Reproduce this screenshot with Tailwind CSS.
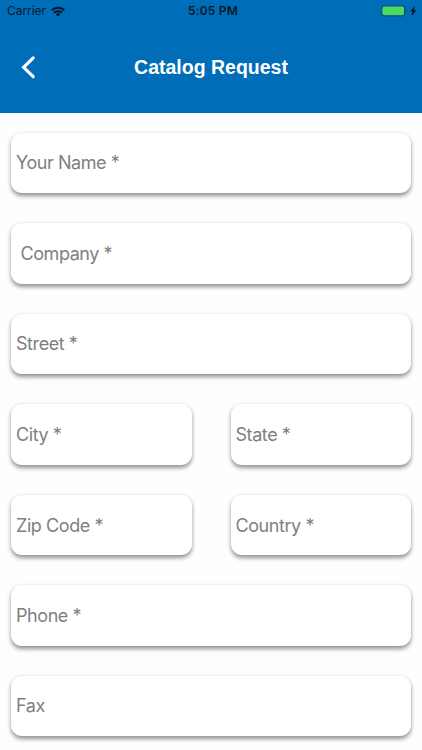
<!DOCTYPE html>
<html lang="en">
<head>
<meta charset="utf-8">
<title>Catalog Request</title>
<script src="https://cdn.jsdelivr.net/npm/@tailwindcss/browser@4"></script>
</head>
<body class="h-[750px] overflow-hidden bg-[#fefefe] font-['Inter',sans-serif]">
<header class="h-[112.5px] bg-[#006db8]">
  <div class="grid h-[22px] grid-cols-3 items-center pr-[5px] pl-[7px] text-[#07192b]">
    <div class="flex items-center gap-[5px]">
      <span class="text-[12px] leading-[22px] tracking-[-0.05px]">Carrier</span>
      <svg class="h-[11px] w-[14px]" viewBox="0 0 14 11" fill="none" stroke="#061424" stroke-width="2"><path d="M.7 4.2a9 9 0 0 1 12.6 0M3 6.8a5.8 5.8 0 0 1 8 0"/><path d="M7 10.5 4.9 8.4a3 3 0 0 1 4.2 0z" fill="#061424" stroke="none"/></svg>
    </div>
    <span class="pl-[2px] text-center text-[12px] leading-[22px] font-semibold tracking-[0.2px]">5:05 PM</span>
    <div class="flex items-center justify-end">
      <svg class="h-[13px] w-[36px]" viewBox="0 0 36 13"><rect x=".7" y=".8" width="23" height="10" rx="2.5" fill="#4cd964" stroke="#08507f" stroke-width="1.3"/><path d="M25.3 4.3q1.5 1.7 0 3.5z" fill="#08507f"/><path d="m33.8 .9-4.6 5.5h2.4l-1.2 4.8 5-6h-2.7z" fill="#031222"/></svg>
    </div>
  </div>
  <div class="grid h-[90px] grid-cols-[1fr_auto_1fr] items-center">
    <svg class="ml-[20px] h-[24px] w-[16px]" viewBox="0 0 16 24" fill="none" stroke="#fff" stroke-width="3.2" stroke-linecap="round"><path d="M13.2 2.9 3.6 12.3 13.2 21.7" stroke-linejoin="miter"/></svg>
    <h1 class="font-['Liberation_Sans',sans-serif] text-[19.5px] leading-[24px] font-bold text-white">Catalog Request</h1>
  </div>
</header>
<main class="grid grid-cols-2 gap-x-[39px] gap-y-[30.2px] pt-[20.5px] pr-[11px] pl-[11px] text-[18px] tracking-[-0.43px] text-[#808080]">
  <div class="col-span-2 flex h-[60.3px] items-center rounded-[11px] bg-white pb-[1px] pl-[5px] shadow-[0_2.5px_4.5px_rgba(0,0,0,0.42)]">Your Name *</div>
  <div class="col-span-2 flex h-[60.3px] items-center rounded-[11px] bg-white pl-[9.5px] shadow-[0_2.5px_4.5px_rgba(0,0,0,0.42)]">Company *</div>
  <div class="col-span-2 flex h-[60.3px] items-center rounded-[11px] bg-white pb-[1px] pl-[5px] shadow-[0_2.5px_4.5px_rgba(0,0,0,0.42)]">Street *</div>
  <div class="flex h-[60.3px] items-center rounded-[11px] bg-white pb-[1px] pl-[5px] shadow-[0_2.5px_4.5px_rgba(0,0,0,0.42)]">City *</div>
  <div class="flex h-[60.3px] items-center rounded-[11px] bg-white pb-[1px] pl-[5px] shadow-[0_2.5px_4.5px_rgba(0,0,0,0.42)]">State *</div>
  <div class="flex h-[60.3px] items-center rounded-[11px] bg-white pl-[5px] shadow-[0_2.5px_4.5px_rgba(0,0,0,0.42)]">Zip Code *</div>
  <div class="flex h-[60.3px] items-center rounded-[11px] bg-white pl-[5px] shadow-[0_2.5px_4.5px_rgba(0,0,0,0.42)]">Country *</div>
  <div class="col-span-2 flex h-[60.3px] items-center rounded-[11px] bg-white pl-[5px] shadow-[0_2.5px_4.5px_rgba(0,0,0,0.42)]">Phone *</div>
  <div class="col-span-2 flex h-[60.3px] items-center rounded-[11px] bg-white pb-[1px] pl-[5px] shadow-[0_2.5px_4.5px_rgba(0,0,0,0.42)]">Fax</div>
</main>
</body>
</html>
